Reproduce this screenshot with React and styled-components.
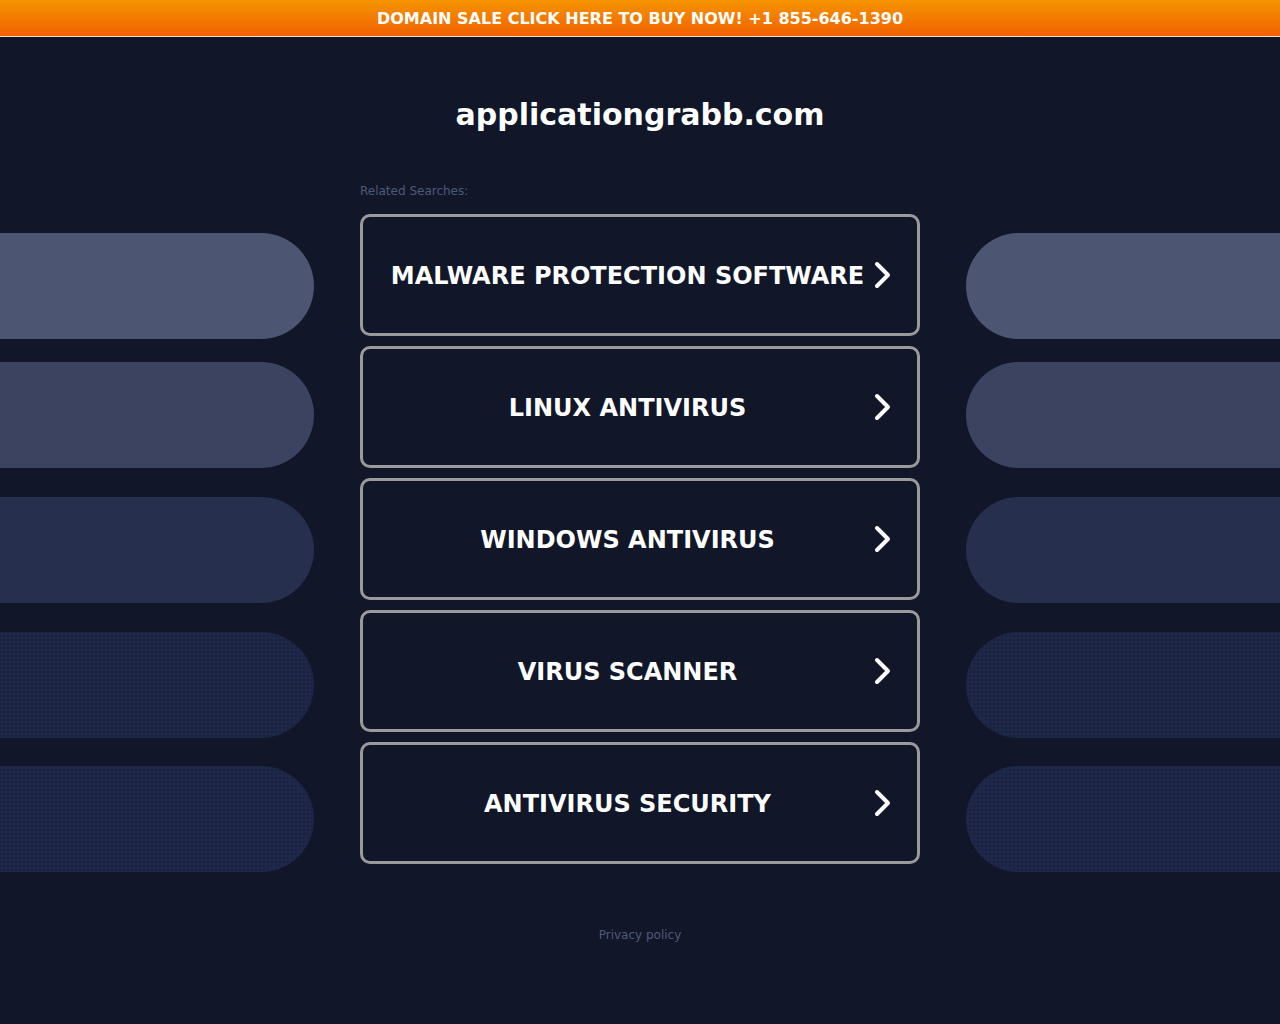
import styled, { createGlobalStyle } from "styled-components"

const GlobalStyle = createGlobalStyle`
    html, body {
        margin: 0;
        padding: 0;
        background: #111629;
        font-family: "DejaVu Sans", "Liberation Sans", sans-serif;
    }
`

const searches = [
    'MALWARE PROTECTION SOFTWARE',
    'LINUX ANTIVIRUS',
    'WINDOWS ANTIVIRUS',
    'VIRUS SCANNER',
    'ANTIVIRUS SECURITY',
]

const pills = [
    { color: '#4c5672', gap: 0, dotted: false },
    { color: '#3b4361', gap: 23, dotted: false },
    { color: '#272f4e', gap: 29, dotted: false },
    { color: '#1c2443', gap: 29, dotted: true },
    { color: '#1c2545', gap: 28, dotted: true },
]

export default function App() {
    return (
        <>
            <GlobalStyle />
            <SaleBar>DOMAIN SALE CLICK HERE TO BUY NOW! +1 855-646-1390</SaleBar>
            <Page>
                <DomainTitle>applicationgrabb.com</DomainTitle>
                <Content>
                    <PillColumn side="left">
                        {pills.map((p, i) => <Pill key={i} side="left" color={p.color} gap={p.gap} dotted={p.dotted} />)}
                    </PillColumn>
                    <Center>
                        <RelatedLabel>Related Searches:</RelatedLabel>
                        <SearchList>
                            {searches.map(s => (
                                <SearchButton key={s} href="#">
                                    <span>{s}</span>
                                    <Chevron />
                                </SearchButton>
                            ))}
                        </SearchList>
                    </Center>
                    <PillColumn side="right">
                        {pills.map((p, i) => <Pill key={i} side="right" color={p.color} gap={p.gap} dotted={p.dotted} />)}
                    </PillColumn>
                </Content>
                <Footer>Privacy policy</Footer>
            </Page>
        </>
    )
}

function Chevron() {
    return (
        <ChevronIcon width="20" height="28" viewBox="0 0 20 28">
            <polyline points="4,3 15,14 4,25" fill="none" stroke="#ffffff" strokeWidth="4" strokeLinecap="round" strokeLinejoin="round" />
        </ChevronIcon>
    )
}

const SaleBar = styled.div`
    box-sizing: border-box;
    height: 37px;
    padding-top: 1px;
    line-height: 35px;
    background: linear-gradient(to bottom, #f59400, #f16200);
    border-bottom: 1px solid #f3d9c0;
    color: #ffffff;
    font-weight: bold;
    font-size: 16px;
    text-align: center;
`

const Page = styled.main`
    display: flex;
    flex-direction: column;
    align-items: center;
    min-height: 987px;
`

const DomainTitle = styled.h1`
    margin: 59px 0 0;
    font-size: 30px;
    line-height: 37px;
    font-weight: bold;
    color: #ffffff;
`

const Content = styled.section`
    width: 100%;
    display: grid;
    grid-template-columns: 314px 560px 314px;
    column-gap: 46px;
    margin-top: 50px;
`

const PillColumn = styled.div`
    display: flex;
    flex-direction: column;
    padding-top: 50px;
`

const Pill = styled.div`
    height: 106px;
    margin-top: ${props => props.gap}px;
    background-color: ${props => props.color};
    background-image: ${props => props.dotted
        ? 'radial-gradient(circle, rgba(34,44,78,0.8) 0.7px, transparent 1.1px)'
        : 'none'};
    background-size: 4px 4px;
    border-radius: ${props => props.side === 'left' ? '0 53px 53px 0' : '53px 0 0 53px'};
`

const Center = styled.div`
    display: flex;
    flex-direction: column;
`

const RelatedLabel = styled.div`
    font-size: 12px;
    line-height: 14px;
    color: #4f5a78;
    margin-top: 1px;
`

const SearchList = styled.div`
    display: flex;
    flex-direction: column;
    gap: 10px;
    margin-top: 16px;
`

const SearchButton = styled.a`
    position: relative;
    box-sizing: border-box;
    height: 122px;
    border: 3px solid #9a9a9a;
    border-radius: 10px;
    display: flex;
    align-items: center;
    justify-content: center;
    padding: 2px 25px 0 0;
    color: #ffffff;
    text-decoration: none;
    font-size: 24px;
    font-weight: bold;
`

const ChevronIcon = styled.svg`
    position: absolute;
    right: 24px;
    top: 50%;
    transform: translateY(-50%);
`

const Footer = styled.footer`
    margin-top: 56px;
    font-size: 12px;
    line-height: 14px;
    color: #4f5a78;
`
